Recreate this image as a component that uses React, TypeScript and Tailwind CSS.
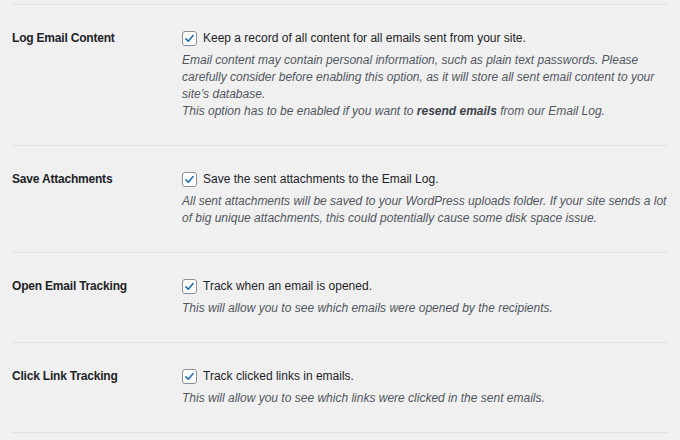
const rows = [
  {
    label: "Log Email Content",
    option: "Keep a record of all content for all emails sent from your site.",
    help: (
      <>
        <p>
          Email content may contain personal information, such as plain text passwords. Please
          <br />
          carefully consider before enabling this option, as it will store all sent email content to your
          <br />
          site’s database.
        </p>
        <p>
          This option has to be enabled if you want to <b className="font-bold text-[#3c434a]">resend emails</b> from our Email Log.
        </p>
      </>
    ),
  },
  {
    label: "Save Attachments",
    option: "Save the sent attachments to the Email Log.",
    help: (
      <p>
        All sent attachments will be saved to your WordPress uploads folder. If your site sends a lot
        <br />
        of big unique attachments, this could potentially cause some disk space issue.
      </p>
    ),
  },
  {
    label: "Open Email Tracking",
    option: "Track when an email is opened.",
    help: <p>This will allow you to see which emails were opened by the recipients.</p>,
  },
  {
    label: "Click Link Tracking",
    option: "Track clicked links in emails.",
    help: <p>This will allow you to see which links were clicked in the sent emails.</p>,
  },
]

function Checkbox() {
  return (
    <span className="flex h-[15px] w-[15px] shrink-0 items-center justify-center rounded-[3px] border border-[#8c8f94] bg-white">
      <svg viewBox="0 0 16 16" className="h-[13px] w-[13px]">
        <path d="M3.6 8.4 L6.6 11.3 L12.4 4.4" fill="none" stroke="#2271b1" strokeWidth="2" strokeLinecap="round" strokeLinejoin="round" />
      </svg>
    </span>
  )
}

export default function App() {
  return (
    <div className="h-[440px] w-[680px] overflow-hidden bg-[#f0f0f1] px-3 pt-1 font-['Liberation_Sans',Arial,sans-serif] text-[12px] text-[#1d2327]">
      <div className="border-t border-[#e2e2e3]">
        {rows.map((r) => (
          <div key={r.label} className="grid grid-cols-[170px_1fr] border-b border-[#e2e2e3] pt-6 pb-[25px]">
            <div className="leading-[18px] font-bold tracking-[-0.2px]">{r.label}</div>
            <div>
              <label className="flex items-center gap-[6px] leading-[18px]">
                <Checkbox />
                <span>{r.option}</span>
              </label>
              <div className="mt-[5px] whitespace-nowrap italic leading-[17px] text-[#50575e]">{r.help}</div>
            </div>
          </div>
        ))}
      </div>
    </div>
  )
}
